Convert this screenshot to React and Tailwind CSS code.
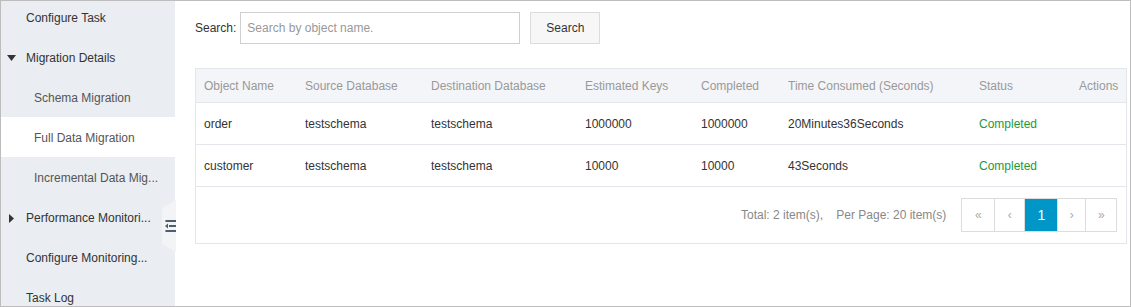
const navItems = [
  { label: "Configure Task", level: 0 },
  { label: "Migration Details", level: 0, caret: "down" },
  { label: "Schema Migration", level: 1 },
  { label: "Full Data Migration", level: 1, active: true },
  { label: "Incremental Data Mig...", level: 1 },
  { label: "Performance Monitori...", level: 0, caret: "right" },
  { label: "Configure Monitoring...", level: 0 },
  { label: "Task Log", level: 0 },
];

const rows = [
  { name: "order", src: "testschema", dst: "testschema", keys: "1000000", done: "1000000", time: "20Minutes36Seconds" },
  { name: "customer", src: "testschema", dst: "testschema", keys: "10000", done: "10000", time: "43Seconds" },
];

function Caret({ dir }) {
  if (dir === "down")
    return (
      <svg width="9" height="6" viewBox="0 0 9 6" className="absolute left-[6px]">
        <path d="M0 0h9L4.5 6z" fill="#333" />
      </svg>
    );
  return (
    <svg width="5" height="9" viewBox="0 0 5 9" className="absolute left-[8px]">
      <path d="M0 0l5 4.5L0 9z" fill="#333" />
    </svg>
  );
}

function Sidebar() {
  return (
    <div className="relative w-[174px] shrink-0 bg-[#eaedf1]">
      <div className="-mt-[4px] flex flex-col">
        {navItems.map((it) => (
          <div
            key={it.label}
            className={
              "relative flex h-[40px] items-center whitespace-nowrap pt-[2px] " +
              (it.level ? "pl-[33px] text-[#555] " : "pl-[25px] text-[#333] ") +
              (it.active ? "bg-white" : "")
            }
          >
            {it.caret && <Caret dir={it.caret} />}
            {it.label}
          </div>
        ))}
      </div>
      <div className="absolute right-[-1px] top-[199px] h-[52px] w-[14px]">
        <svg width="14" height="52" viewBox="0 0 14 52" className="absolute inset-0">
          <path d="M14 0v52L0 44V8z" fill="#f3f4f6" />
        </svg>
        <svg width="11" height="12" viewBox="0 0 11 12" className="absolute left-[3px] top-[20px]">
          <rect x="0" y="0" width="11" height="2" fill="#4f5d6e" />
          <rect x="4" y="5" width="7" height="2" fill="#4f5d6e" />
          <path d="M0 6l3-2.5v5z" fill="#4f5d6e" />
          <rect x="0" y="10" width="11" height="2" fill="#4f5d6e" />
          <rect x="0" y="0" width="1" height="2" fill="#e8893a" />
          <rect x="0" y="10" width="1" height="2" fill="#e8893a" />
        </svg>
      </div>
    </div>
  );
}

const cols = [
  "w-[101px]",
  "w-[126px]",
  "w-[154px]",
  "w-[116px]",
  "w-[87px]",
  "w-[191px]",
  "w-[100px]",
];

function PageBtn({ children, active, className }) {
  return (
    <div
      className={
        "flex h-[32px] items-center justify-center border-l border-[#dcdcdc] first:border-l-0 " +
        (active ? "bg-[#0096c8] text-[14px] text-white " : "text-[#aaa] ") +
        className
      }
    >
      {children}
    </div>
  );
}

export default function App() {
  return (
    <div className="h-[307px] w-[1131px] overflow-hidden border border-[#bdbdbd] bg-white font-['Liberation_Sans',Tahoma,sans-serif] text-[12px]">
      <div className="flex h-full">
        <Sidebar />
        <div className="flex-1 pl-[20px] pr-[3px] pt-[11px]">
          <div className="flex items-center">
            <span className="mr-[4px] text-[#333]">Search:</span>
            <input
              className="h-[32px] w-[280px] border border-[#d0d0d0] px-[6px] text-[12px] text-[#333] outline-none placeholder:text-[#999]"
              placeholder="Search by object name."
            />
            <button className="ml-[10px] h-[32px] w-[70px] border border-[#dcdcdc] bg-[#f7f7f7] text-[#333]">
              Search
            </button>
          </div>
          <div className="mt-[24px] border border-[#e3e6eb]">
            <div className="flex h-[34px] items-center border-b border-[#e3e6eb] bg-[#f4f5f8] pl-[8px] text-[#999]">
              {["Object Name", "Source Database", "Destination Database", "Estimated Keys", "Completed", "Time Consumed (Seconds)", "Status"].map(
                (h, i) => (
                  <div key={h} className={cols[i] + " shrink-0 whitespace-nowrap"}>
                    {h}
                  </div>
                )
              )}
              <div className="flex-1 pr-[8px] text-right">Actions</div>
            </div>
            {rows.map((r) => (
              <div key={r.name} className="flex h-[42px] items-center border-b border-[#e3e6eb] pl-[8px] text-[#333]">
                <div className={cols[0]}>{r.name}</div>
                <div className={cols[1]}>{r.src}</div>
                <div className={cols[2]}>{r.dst}</div>
                <div className={cols[3]}>{r.keys}</div>
                <div className={cols[4]}>{r.done}</div>
                <div className={cols[5]}>{r.time}</div>
                <div className={cols[6] + " text-[#1a9a3c]"}>Completed</div>
              </div>
            ))}
            <div className="flex h-[56px] items-center justify-end pr-[9px]">
              <span className="mr-[15px] text-[#888]">
                Total: 2 item(s),&nbsp;&nbsp;&nbsp; Per Page: 20 item(s)
              </span>
              <div className="flex border border-[#dcdcdc]">
                <PageBtn className="w-[32px]">«</PageBtn>
                <PageBtn className="w-[30px]">‹</PageBtn>
                <PageBtn active className="w-[33px]">1</PageBtn>
                <PageBtn className="w-[28px]">›</PageBtn>
                <PageBtn className="w-[31px]">»</PageBtn>
              </div>
            </div>
          </div>
        </div>
      </div>
    </div>
  );
}
